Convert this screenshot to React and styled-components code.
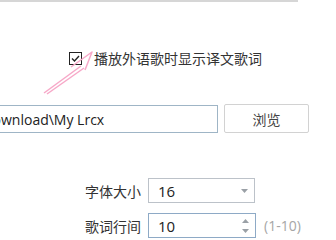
import React from "react";
import styled, { createGlobalStyle } from "styled-components";

const GlobalStyle = createGlobalStyle`
  html, body {
    margin: 0;
    padding: 0;
    background: #fff;
  }
  body {
    font-family: "Noto Sans CJK SC", "Noto Sans", sans-serif;
    color: #333;
  }
`;

const Page = styled.div`
  position: relative;
  width: 336px;
  height: 240px;
  overflow: hidden;
  display: flex;
  flex-direction: column;
`;

const TopRule = styled.div`
  width: 298px;
  height: 2px;
  background: #d6d6d6;
`;

const CheckRow = styled.label`
  margin-top: 44px;
  height: 24px;
  padding-left: 69px;
  display: flex;
  align-items: center;
  gap: 12px;
  font-size: 14px;
  color: #333;
`;

const Box = styled.span`
  width: 11px;
  height: 11px;
  border: 1px solid #222;
  background: #fff;
  display: flex;
  align-items: center;
  justify-content: center;
`;

const PathRow = styled.div`
  margin-top: 34px;
  display: flex;
  align-items: flex-start;
  gap: 6px;
`;

const PathField = styled.div`
  margin-left: -120px;
  margin-top: 1px;
  width: 336px;
  height: 26px;
  border: 1px solid #9fb5c6;
  display: flex;
  align-items: center;
  font-family: "Open Sans", "Noto Sans CJK SC", sans-serif;
  font-size: 14px;
  color: #222;
  overflow: hidden;
  white-space: nowrap;
`;

const Hidden = styled.span`
  width: 120px;
  flex: none;
  text-align: right;
  overflow: hidden;
`;

const Button = styled.button`
  width: 85px;
  height: 29px;
  border: 1px solid #d2d2d2;
  border-radius: 2px;
  background: #fff;
  font-family: "Noto Sans CJK SC", sans-serif;
  font-size: 14px;
  color: #444;
  padding: 0;
`;

const Form = styled.div`
  margin-top: 45px;
  display: flex;
  flex-direction: column;
  gap: 10px;
`;

const Row = styled.div`
  display: flex;
  align-items: center;
  height: 25px;
  padding-left: 85px;
  gap: 7px;
`;

const Label = styled.span`
  width: 56px;
  font-size: 14px;
  color: #333;
`;

const Field = styled.div`
  box-sizing: border-box;
  width: ${(p) => p.$w}px;
  height: 25px;
  border: 1px solid ${(p) => (p.$focus ? "#8eaac6" : "#bcc2c9")};
  display: flex;
  align-items: center;
  padding: 0 6px 0 9px;
  font-family: "Open Sans", sans-serif;
  font-size: 15px;
  color: #222;
`;

const Value = styled.span`
  flex: 1;
`;

const Hint = styled.span`
  margin-left: 1px;
  font-family: "Open Sans", sans-serif;
  font-size: 14px;
  color: #a6a6a6;
`;

const Overlay = styled.svg`
  position: absolute;
  left: 0;
  top: 0;
  pointer-events: none;
`;

export default function App() {
  return (
    <>
      <GlobalStyle />
      <Page>
        <TopRule />
        <CheckRow>
          <Box>
            <svg width="9" height="9" viewBox="0 0 9 9">
              <path d="M1 4.5 L3.5 7 L8 2" fill="none" stroke="#222" strokeWidth="1.4" />
            </svg>
          </Box>
          播放外语歌时显示译文歌词
        </CheckRow>
        <PathRow>
          <PathField>
            <Hidden>D:\Do</Hidden>
            <span>wnload\My Lrcx</span>
          </PathField>
          <Button>浏览</Button>
        </PathRow>
        <Form>
          <Row>
            <Label>字体大小</Label>
            <Field $w={107}>
              <Value>16</Value>
              <svg width="7" height="4" viewBox="0 0 7 4">
                <path d="M0 0 H7 L3.5 4 Z" fill="#9aa0a6" />
              </svg>
            </Field>
          </Row>
          <Row>
            <Label>歌词行间</Label>
            <Field $w={108} $focus>
              <Value>10</Value>
              <svg width="7" height="16" viewBox="0 0 7 16">
                <path d="M0 5 H7 L3.5 1 Z" fill="#9aa0a6" />
                <path d="M0 11 H7 L3.5 15 Z" fill="#9aa0a6" />
              </svg>
            </Field>
            <Hint>(1-10)</Hint>
          </Row>
        </Form>
        <Overlay width="336" height="240">
          <g fill="none" stroke="#f7a8c8" strokeWidth="1.5" strokeLinejoin="round">
            <path d="M44 93 L81 66" />
            <path d="M47 94 L84 68" />
            <path d="M71 67 L92 52 L85 70" />
          </g>
        </Overlay>
      </Page>
    </>
  );
}
